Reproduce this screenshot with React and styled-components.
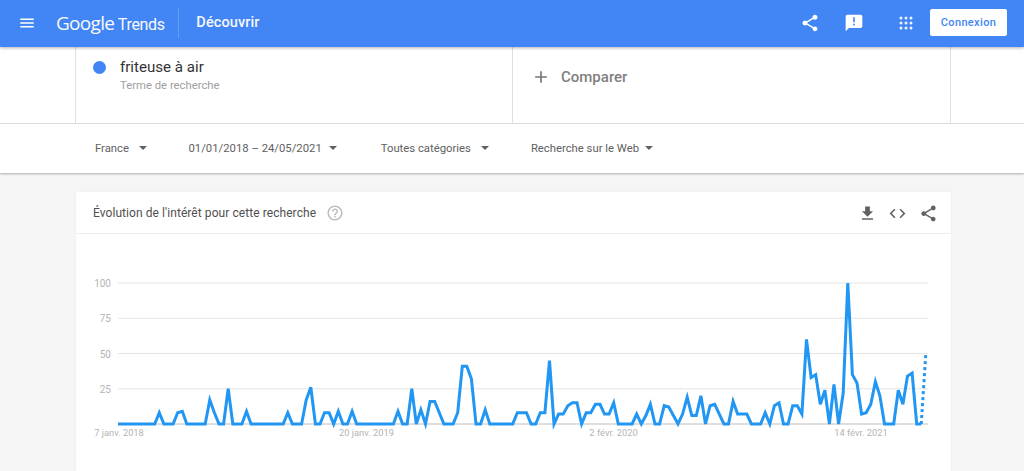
import React from 'react';
import styled, { createGlobalStyle } from 'styled-components';
import {
  MdMenu,
  MdShare,
  MdAnnouncement,
  MdAdd,
  MdHelpOutline,
  MdFileDownload,
  MdCode,
} from 'react-icons/md';

const VALUES = [
  0, 0, 0, 0, 0, 0, 0, 0, 0, 8, 0, 0, 0, 8, 9, 0, 0, 0, 0, 0, 17, 8, 0, 0, 25, 0, 0, 0, 9, 0,
  0, 0, 0, 0, 0, 0, 0, 8, 0, 0, 0, 17, 26, 0, 0, 8, 8, 0, 9, 0, 0, 9, 0, 0, 0, 0, 0, 0, 0, 0,
  0, 9, 0, 0, 25, 0, 10, 0, 16, 16, 8, 0, 0, 0, 8, 41, 41, 32, 0, 0, 10, 0, 0, 0, 0, 0, 0, 8, 8, 8,
  0, 0, 8, 8, 45, 0, 7, 7, 13, 15, 15, 0, 8, 8, 14, 14, 7, 7, 15, 0, 0, 0, 0, 7, 0, 6, 14, 0, 0, 13,
  12, 6, 0, 7, 19, 6, 6, 20, 0, 13, 14, 7, 0, 0, 16, 7, 7, 7, 0, 0, 0, 8, 0, 13, 15, 0, 0, 13, 13, 7,
  60, 33, 35, 14, 24, 0, 28, 0, 22, 100, 35, 29, 7, 8, 14, 30, 20, 0, 0, 0, 24, 14, 34, 36, 0, 0,
];

const CHART_LEFT = 118;
const CHART_RIGHT = 928;
const STEP = 4.59;
const BASE_Y = 190;
const UNIT = 1.41;

const pointX = (i) => CHART_LEFT + i * STEP;
const pointY = (v) => BASE_Y - v * UNIT;
const linePoints = VALUES.map((v, i) => `${pointX(i).toFixed(1)},${pointY(v).toFixed(1)}`).join(' ');

const GRID = [100, 75, 50, 25];
const DATES = [
  { label: '7 janv. 2018', x: 119 },
  { label: '20 janv. 2019', x: 366.5 },
  { label: '2 févr. 2020', x: 613.5 },
  { label: '14 févr. 2021', x: 861 },
];

const FILTERS = [
  { label: 'France', gap: 10, after: 41.5 },
  { label: '01/01/2018 – 24/05/2021', gap: 7, after: 44 },
  { label: 'Toutes catégories', gap: 10, after: 42 },
  { label: 'Recherche sur le Web', gap: 6, after: 0 },
];

const APP_DOTS = [0, 1, 2].flatMap((row) => [0, 1, 2].map((col) => [col * 5 + 2, row * 5 + 2]));

function AppsIcon() {
  return (
    <svg width="14" height="14" viewBox="0 0 14 14" fill="#fff" fillOpacity="0.9">
      {APP_DOTS.map(([cx, cy]) => (
        <circle key={`${cx}-${cy}`} cx={cx} cy={cy} r="1.5" />
      ))}
    </svg>
  );
}

function Chart() {
  return (
    <ChartSvg viewBox="0 0 1024 237" width="1024" height="237">
      {GRID.map((v) => (
        <g key={v}>
          <line x1={CHART_LEFT} x2={CHART_RIGHT} y1={pointY(v)} y2={pointY(v)} stroke="#e4e4e4" strokeWidth="1" />
          <AxisLabel x="111" y={pointY(v) + 4} textAnchor="end">
            {v}
          </AxisLabel>
        </g>
      ))}
      <line x1={CHART_LEFT} x2={CHART_RIGHT} y1={BASE_Y} y2={BASE_Y} stroke="#bdbdbd" strokeWidth="1" />
      {DATES.map((d) => (
        <AxisLabel key={d.label} x={d.x} y={BASE_Y + 12} textAnchor="middle" $size={9.3}>
          {d.label}
        </AxisLabel>
      ))}
      <polyline points={linePoints} fill="none" stroke="#2196f3" strokeWidth="3" strokeLinejoin="miter" />
      <line
        x1={pointX(175)}
        y1={pointY(0)}
        x2={pointX(176)}
        y2={pointY(50)}
        stroke="#2196f3"
        strokeWidth="3"
        strokeDasharray="3 3"
      />
    </ChartSvg>
  );
}

export default function App() {
  return (
    <Page>
      <GlobalStyle />
      <Header>
        <MenuIcon />
        <Logo>
          <LogoGoogle>Google</LogoGoogle>
          <LogoTrends>Trends</LogoTrends>
        </Logo>
        <HeaderTitle>Découvrir</HeaderTitle>
        <HeaderActions>
          <HeaderAction $width={30}>
            <MdShare size={20} />
          </HeaderAction>
          <HeaderAction $width={58}>
            <MdAnnouncement size={20} />
          </HeaderAction>
          <HeaderAction $width={46}>
            <AppsIcon />
          </HeaderAction>
          <LoginButton>Connexion</LoginButton>
        </HeaderActions>
      </Header>

      <SearchBar>
        <SearchCell>
          <TermDot />
          <TermText>
            <TermName>friteuse à air</TermName>
            <TermKind>Terme de recherche</TermKind>
          </TermText>
        </SearchCell>
        <CompareCell>
          <MdAdd size={20} color="#757575" />
          <CompareLabel>Comparer</CompareLabel>
        </CompareCell>
      </SearchBar>

      <Filters>
        {FILTERS.map((f) => (
          <FilterItem key={f.label} $gap={f.gap} $after={f.after}>
            {f.label}
            <Caret />
          </FilterItem>
        ))}
      </Filters>

      <Card>
        <CardHeader>
          <CardTitle>Évolution de l'intérêt pour cette recherche</CardTitle>
          <MdHelpOutline size={18} color="#bdbdbd" />
          <CardActions>
            <MdFileDownload size={19} />
            <MdCode size={19} />
            <MdShare size={19} />
          </CardActions>
        </CardHeader>
        <Chart />
      </Card>
    </Page>
  );
}

const GlobalStyle = createGlobalStyle`
  html, body {
    margin: 0;
    padding: 0;
    overflow: hidden;
    background: #f5f5f5;
    font-family: Roboto, "Liberation Sans", sans-serif;
  }
`;

const Page = styled.div`
  width: 1024px;
  height: 471px;
  overflow: hidden;
  background: #f5f5f5;
`;

const Header = styled.header`
  position: relative;
  z-index: 2;
  display: flex;
  align-items: center;
  height: 47px;
  padding: 0 17px 2px 18px;
  box-sizing: border-box;
  background: #4285f4;
  color: #fff;
  box-shadow: 0 1px 3px rgba(0, 0, 0, 0.3);
`;

const MenuIcon = styled(MdMenu)`
  width: 18px;
  height: 18px;
  margin-right: 20px;
`;

const Logo = styled.div`
  display: flex;
  align-items: baseline;
  gap: 3.5px;
  height: 30px;
  padding-right: 13.5px;
  line-height: 30px;
  border-right: 1px solid rgba(255, 255, 255, 0.2);
  opacity: 0.96;
`;

const LogoGoogle = styled.span`
  font-family: "Open Sans", sans-serif;
  font-size: 19px;
  letter-spacing: -0.7px;
`;

const LogoTrends = styled.span`
  font-size: 16px;
  letter-spacing: -0.3px;
`;

const HeaderTitle = styled.div`
  margin-left: 17px;
  font-size: 14.5px;
  letter-spacing: 0.1px;
  font-weight: 500;
  opacity: 0.95;
`;

const HeaderActions = styled.div`
  display: flex;
  align-items: center;
  margin-left: auto;
`;

const HeaderAction = styled.div`
  display: flex;
  justify-content: center;
  width: ${(p) => p.$width}px;
`;

const LoginButton = styled.div`
  display: flex;
  align-items: center;
  justify-content: center;
  width: 77px;
  height: 27px;
  margin-left: 1px;
  border-radius: 2px;
  background: #fff;
  color: #4285f4;
  font-size: 11px;
  font-weight: 500;
  letter-spacing: 0.35px;
`;

const SearchBar = styled.section`
  display: flex;
  height: 76px;
  padding-left: 75px;
  background: #fff;
  border-bottom: 1px solid #e0e0e0;
`;

const SearchCell = styled.div`
  display: flex;
  width: 437px;
  padding: 12px 0 0 17px;
  box-sizing: border-box;
  border-left: 1px solid #e0e0e0;
`;

const TermDot = styled.span`
  width: 13px;
  height: 13px;
  margin: 2px 14px 0 0;
  border-radius: 50%;
  background: #4285f4;
`;

const TermText = styled.div`
  display: flex;
  flex-direction: column;
`;

const TermName = styled.span`
  font-size: 15.1px;
  line-height: 17px;
  color: #333;
`;

const TermKind = styled.span`
  margin-top: 3px;
  font-size: 11.3px;
  line-height: 14px;
  color: #9e9e9e;
`;

const CompareCell = styled.div`
  display: flex;
  align-items: center;
  gap: 10px;
  width: 439px;
  padding: 0 0 16px 18px;
  box-sizing: border-box;
  border-left: 1px solid #e0e0e0;
  border-right: 1px solid #e0e0e0;
`;

const CompareLabel = styled.span`
  font-size: 15px;
  font-weight: 500;
  color: #808080;
`;

const Filters = styled.nav`
  display: flex;
  align-items: center;
  height: 49px;
  padding: 0 0 1px 95px;
  box-sizing: border-box;
  background: #fff;
  box-shadow: 0 1px 2px rgba(0, 0, 0, 0.3);
`;

const FilterItem = styled.div`
  display: flex;
  align-items: center;
  gap: ${(p) => p.$gap}px;
  margin-right: ${(p) => p.$after}px;
  font-size: 11.3px;
  color: #616161;
`;

const Caret = styled.span`
  width: 0;
  height: 0;
  border-left: 4px solid transparent;
  border-right: 4px solid transparent;
  border-top: 4.5px solid #616161;
`;

const Card = styled.article`
  width: 875px;
  height: 300px;
  margin: 19px 0 0 76px;
  background: #fff;
  box-shadow: 0 0 1px rgba(0, 0, 0, 0.08);
`;

const CardHeader = styled.div`
  display: flex;
  align-items: center;
  gap: 10px;
  height: 40px;
  padding: 1px 13px 0 17px;
  border-bottom: 1px solid #eeeeee;
`;

const CardTitle = styled.h2`
  margin: 0;
  font-size: 12px;
  font-weight: 400;
  letter-spacing: 0.07px;
  color: #505050;
`;

const CardActions = styled.div`
  display: flex;
  align-items: center;
  gap: 11.5px;
  margin-left: auto;
  margin-right: 0.5px;
  color: #616161;
`;

const ChartSvg = styled.svg`
  display: block;
  margin-left: -76px;
`;

const AxisLabel = styled.text`
  font-family: Roboto, sans-serif;
  font-size: ${(p) => p.$size || 10}px;
  fill: #b4b4b4;
`;
